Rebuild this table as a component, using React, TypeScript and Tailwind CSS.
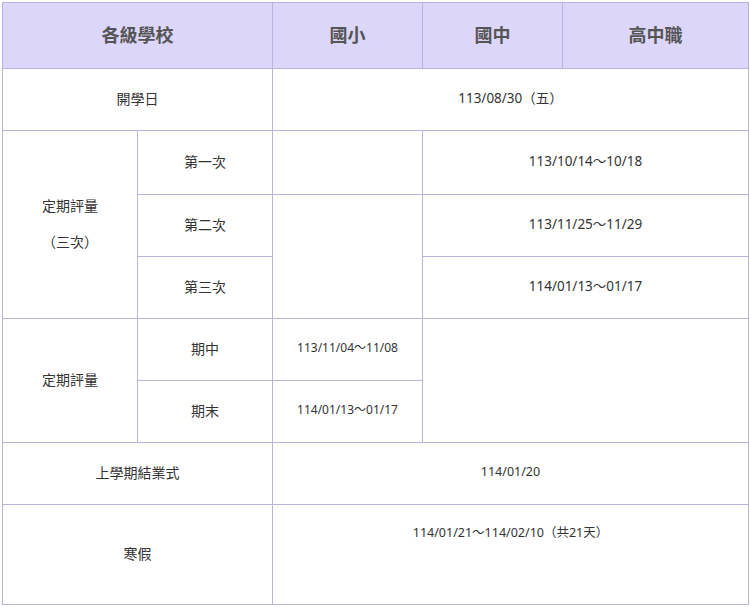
import React from 'react';

const cell = 'border border-[#bab4dc] text-center align-middle';
const body = `${cell} pb-[3px]`;
const big = 'text-[13.5px] text-[#333]';
const small = 'text-[12.5px] text-[#333]';

export default function App() {
  return (
    <div
      className="bg-white pt-[2px] pl-[2px]"
      style={{ fontFamily: '"Noto Sans", "Noto Sans CJK TC", sans-serif' }}
    >
      <table className="w-[746px] table-fixed border-collapse text-[14px] text-[#333]">
        <colgroup>
          <col className="w-[135px]" />
          <col className="w-[135px]" />
          <col className="w-[150px]" />
          <col className="w-[140px]" />
          <col className="w-[186px]" />
        </colgroup>
        <thead>
          <tr className="h-[66px] bg-[#dcd6fa]">
            <th colSpan={2} className={`${cell} text-[18px] font-bold text-[#555]`}>各級學校</th>
            <th className={`${cell} text-[18px] font-bold text-[#555]`}>國小</th>
            <th className={`${cell} text-[18px] font-bold text-[#555]`}>國中</th>
            <th className={`${cell} text-[18px] font-bold text-[#555]`}>高中職</th>
          </tr>
        </thead>
        <tbody>
          <tr className="h-[62px]">
            <td colSpan={2} className={body}>開學日</td>
            <td colSpan={3} className={`${body} text-[13.5px]`}>113/08/30（五）</td>
          </tr>

          {/* 三次定期評量 */}
          <tr className="h-[64px]">
            <td rowSpan={3} className={body}>
              <div className="flex flex-col items-center gap-[15px]">
                <span>定期評量</span>
                <span>（三次）</span>
              </div>
            </td>
            <td className={body}>第一次</td>
            <td className={body}></td>
            <td colSpan={2} className={`${body} ${big}`}>113/10/14～10/18</td>
          </tr>
          <tr className="h-[62px]">
            <td className={body}>第二次</td>
            <td rowSpan={2} className={body}></td>
            <td colSpan={2} className={`${body} ${big}`}>113/11/25～11/29</td>
          </tr>
          <tr className="h-[62px]">
            <td className={body}>第三次</td>
            <td colSpan={2} className={`${body} ${big}`}>114/01/13～01/17</td>
          </tr>

          {/* 期中 / 期末 */}
          <tr className="h-[62px]">
            <td rowSpan={2} className={body}>定期評量</td>
            <td className={body}>期中</td>
            <td className={`${body} text-[12px]`}>113/11/04～11/08</td>
            <td colSpan={2} rowSpan={2} className={body}></td>
          </tr>
          <tr className="h-[62px]">
            <td className={body}>期末</td>
            <td className={`${body} text-[12px]`}>114/01/13～01/17</td>
          </tr>

          <tr className="h-[62px]">
            <td colSpan={2} className={body}>上學期結業式</td>
            <td colSpan={3} className={`${body} ${small}`}>114/01/20</td>
          </tr>
          <tr className="h-[100px]">
            <td colSpan={2} className={body}>寒假</td>
            <td colSpan={3} className={`${cell} ${small} align-top pt-[19px]`}>
              114/01/21～114/02/10（共21天）
            </td>
          </tr>
        </tbody>
      </table>
    </div>
  );
}
